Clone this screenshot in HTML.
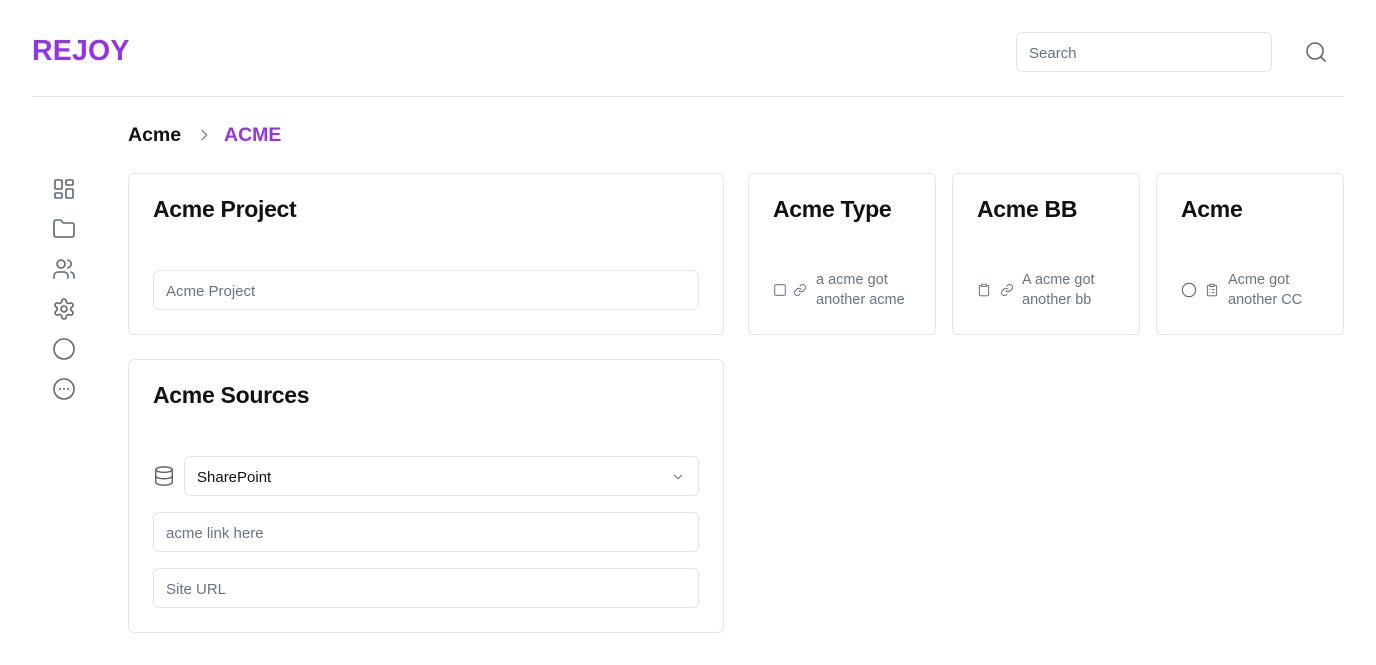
<!DOCTYPE html>
<html><head><meta charset="utf-8"><style>
*{box-sizing:border-box;margin:0;padding:0}
body{width:1376px;height:665px;background:#fff;font-family:"Liberation Sans",sans-serif;color:#111;position:relative;overflow:hidden}
.abs{position:absolute}
.logo{left:32px;top:35px;font-size:28.5px;font-weight:bold;color:#9333ea;letter-spacing:0.2px}
.search{left:1016px;top:32px;width:256px;height:40px;border:1px solid #e5e5e5;border-radius:6px;padding:12px 12px;font-size:15px;color:#6b7280}
.hr{left:32px;top:96px;width:1312px;height:1px;background:#e5e5e5}
.card{position:absolute;border:1px solid #e5e5e5;border-radius:6px;background:#fff}
.card h2{position:absolute;left:24px;top:22px;font-size:23px;font-weight:bold;color:#111;letter-spacing:-0.3px}
.inp{position:absolute;height:40px;border:1px solid #e5e5e5;border-radius:6px;padding:12px 12px;font-size:15px;color:#6b7280}
.small{position:absolute;font-size:14.5px;color:#6b7280;line-height:20px}
svg{position:absolute;fill:none;stroke:#5f6670;stroke-width:1.6;stroke-linecap:round;stroke-linejoin:round}
</style></head><body>
<div class="abs logo">REJOY</div>
<div class="abs search">Search</div>
<svg style="left:1304px;top:40px" width="24" height="24" viewBox="0 0 24 24" stroke-width="1.8"><circle cx="11" cy="11" r="8"/><path d="M21 21l-4.3-4.3"/></svg>
<div class="abs hr"></div>
<div class="abs" style="left:128px;top:124px;font-size:19.5px;font-weight:bold">Acme</div>
<svg style="left:196px;top:127px" width="16" height="16" viewBox="0 0 24 24" stroke="#9ca3af" stroke-width="2"><path d="M9 5l7 7-7 7"/></svg>
<div class="abs" style="left:224px;top:124px;font-size:19.5px;font-weight:bold;color:#9333ea">ACME</div>
<!-- sidebar -->
<svg style="left:52px;top:177px" width="24" height="24" viewBox="0 0 24 24"><rect x="3" y="3" width="7" height="9" rx="1"/><rect x="14" y="3" width="7" height="5" rx="1"/><rect x="14" y="12" width="7" height="9" rx="1"/><rect x="3" y="16" width="7" height="5" rx="1"/></svg>
<svg style="left:52px;top:217px" width="24" height="24" viewBox="0 0 24 24"><path d="M20 20a2 2 0 0 0 2-2V8a2 2 0 0 0-2-2h-7.9a2 2 0 0 1-1.7-.9l-.8-1.2A2 2 0 0 0 7.9 3H4a2 2 0 0 0-2 2v13a2 2 0 0 0 2 2z"/></svg>
<svg style="left:52px;top:257px" width="24" height="24" viewBox="0 0 24 24"><path d="M16 21v-2a4 4 0 0 0-4-4H6a4 4 0 0 0-4 4v2"/><circle cx="9" cy="7" r="4"/><path d="M22 21v-2a4 4 0 0 0-3-3.9M16 3.1a4 4 0 0 1 0 7.8"/></svg>
<svg style="left:52px;top:297px" width="24" height="24" viewBox="0 0 24 24"><path d="M12.2 2h-.4a2 2 0 0 0-2 2v.2a2 2 0 0 1-1 1.7l-.4.3a2 2 0 0 1-2 0l-.2-.1a2 2 0 0 0-2.7.7l-.2.4a2 2 0 0 0 .7 2.7l.2.1a2 2 0 0 1 1 1.7v.5a2 2 0 0 1-1 1.7l-.2.1a2 2 0 0 0-.7 2.7l.2.4a2 2 0 0 0 2.7.7l.2-.1a2 2 0 0 1 2 0l.4.3a2 2 0 0 1 1 1.7V20a2 2 0 0 0 2 2h.4a2 2 0 0 0 2-2v-.2a2 2 0 0 1 1-1.7l.4-.3a2 2 0 0 1 2 0l.2.1a2 2 0 0 0 2.7-.7l.2-.4a2 2 0 0 0-.7-2.7l-.2-.1a2 2 0 0 1-1-1.7v-.5a2 2 0 0 1 1-1.7l.2-.1a2 2 0 0 0 .7-2.7l-.2-.4a2 2 0 0 0-2.7-.7l-.2.1a2 2 0 0 1-2 0l-.4-.3a2 2 0 0 1-1-1.7V4a2 2 0 0 0-2-2z"/><circle cx="12" cy="12" r="3"/></svg>
<svg style="left:52px;top:337px" width="24" height="24" viewBox="0 0 24 24"><circle cx="12" cy="12" r="10"/></svg>
<svg style="left:52px;top:377px" width="24" height="24" viewBox="0 0 24 24"><circle cx="12" cy="12" r="10"/><path d="M8 12h.01M12 12h.01M16 12h.01" stroke-width="2"/></svg>
<!-- cards -->
<div class="card" style="left:128px;top:173px;width:596px;height:162px"><h2>Acme Project</h2>
<div class="inp" style="left:24px;top:96px;width:546px">Acme Project</div></div>
<div class="card" style="left:748px;top:173px;width:188px;height:162px"><h2>Acme Type</h2>
<svg style="left:24px;top:109px" width="14" height="14" viewBox="0 0 24 24" stroke-width="2"><rect x="3" y="3" width="18" height="18" rx="2"/></svg>
<svg style="left:44px;top:109px" width="14" height="14" viewBox="0 0 24 24" stroke-width="2"><path d="M10 13a5 5 0 0 0 7.5.5l3-3a5 5 0 0 0-7-7l-1.7 1.7"/><path d="M14 11a5 5 0 0 0-7.5-.5l-3 3a5 5 0 0 0 7 7l1.7-1.7"/></svg>
<div class="small" style="left:67px;top:96px">a acme got<br>another acme</div></div>
<div class="card" style="left:952px;top:173px;width:188px;height:162px"><h2>Acme BB</h2>
<svg style="left:24px;top:109px" width="14" height="14" viewBox="0 0 24 24" stroke-width="2"><rect x="8" y="2" width="8" height="4" rx="1"/><path d="M16 4h2a2 2 0 0 1 2 2v14a2 2 0 0 1-2 2H6a2 2 0 0 1-2-2V6a2 2 0 0 1 2-2h2"/></svg>
<svg style="left:47px;top:109px" width="14" height="14" viewBox="0 0 24 24" stroke-width="2"><path d="M10 13a5 5 0 0 0 7.5.5l3-3a5 5 0 0 0-7-7l-1.7 1.7"/><path d="M14 11a5 5 0 0 0-7.5-.5l-3 3a5 5 0 0 0 7 7l1.7-1.7"/></svg>
<div class="small" style="left:69px;top:96px">A acme got<br>another bb</div></div>
<div class="card" style="left:1156px;top:173px;width:188px;height:162px"><h2>Acme</h2>
<svg style="left:24px;top:108px" width="16" height="16" viewBox="0 0 24 24" stroke-width="2"><circle cx="12" cy="12" r="10"/></svg>
<svg style="left:48px;top:109px" width="14" height="14" viewBox="0 0 24 24" stroke-width="2"><rect x="8" y="2" width="8" height="4" rx="1"/><path d="M16 4h2a2 2 0 0 1 2 2v14a2 2 0 0 1-2 2H6a2 2 0 0 1-2-2V6a2 2 0 0 1 2-2h2M12 11h4M12 16h4M8 11h.01M8 16h.01"/></svg>
<div class="small" style="left:71px;top:96px">Acme got<br>another CC</div></div>
<div class="card" style="left:128px;top:359px;width:596px;height:274px"><h2>Acme Sources</h2>
<svg style="left:24px;top:105px" width="22" height="22" viewBox="0 0 24 24"><ellipse cx="12" cy="5" rx="9" ry="3"/><path d="M3 5v14a9 3 0 0 0 18 0V5M3 12a9 3 0 0 0 18 0"/></svg>
<div class="inp" style="left:55px;top:96px;width:515px;color:#111">SharePoint</div>
<svg style="left:542px;top:110px" width="14" height="14" viewBox="0 0 24 24" stroke-width="2"><path d="M6 9l6 6 6-6"/></svg>
<div class="inp" style="left:24px;top:152px;width:546px">acme link here</div>
<div class="inp" style="left:24px;top:208px;width:546px">Site URL</div></div>
</body></html>
